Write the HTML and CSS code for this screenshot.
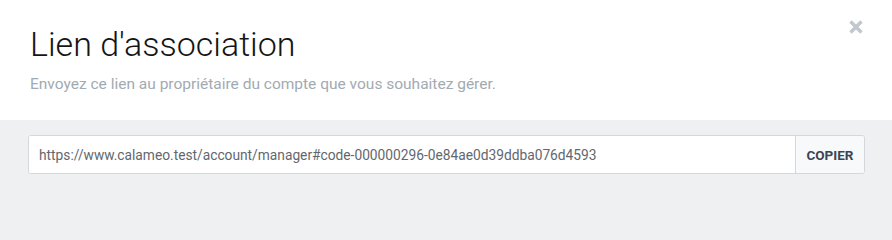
FILE: index.html
```html
<!DOCTYPE html>
<html lang="fr">
<head>
<meta charset="utf-8">
<link rel="stylesheet" href="styles.css">
</head>
<body>
<div class="modal">
  <div class="modal-header">
    <h1 class="title">Lien d'association</h1>
    <p class="subtitle">Envoyez ce lien au propriétaire du compte que vous souhaitez gérer.</p>
    <button class="close" aria-label="Fermer">
      <svg width="14" height="14" viewBox="0 0 14 14"><path d="M1.5 1.5L12.5 12.5M12.5 1.5L1.5 12.5" stroke="#c1c7cd" stroke-width="3.4" stroke-linecap="butt"/></svg>
    </button>
  </div>
  <div class="modal-body">
    <div class="input-group">
      <input class="link-input" type="text" value="https://www.calameo.test/account/manager#code-000000296-0e84ae0d39ddba076d4593" readonly>
      <button class="copy-btn">COPIER</button>
    </div>
  </div>
</div>
</body>
</html>
```
FILE: styles.css
```css
html, body {
  margin: 0;
  padding: 0;
  background: #eff0f2;
  font-family: Roboto, "Liberation Sans", sans-serif;
}
.modal {
  width: 892px;
  min-height: 202px;
  display: flex;
  flex-direction: column;
}
.modal-header {
  position: relative;
  height: 120px;
  box-sizing: border-box;
  padding: 23px 30px 0 30px;
  background: #ffffff;
}
.title {
  margin: 0;
  font-size: 34px;
  font-weight: 300;
  color: #151515;
  line-height: 42px;
}
.subtitle {
  margin: 9px 0 0 0;
  font-size: 15.5px;
  font-weight: 400;
  color: #a2aab2;
  line-height: 20px;
}
.close {
  position: absolute;
  top: 20px;
  right: 29px;
  width: 14px;
  height: 14px;
  padding: 0;
  border: 0;
  background: none;
  display: flex;
}
.modal-body {
  flex: 1;
  background: #eff0f2;
  padding: 15px 27px 28px 28px;
}
.input-group {
  display: flex;
  height: 39px;
  box-sizing: border-box;
  border: 1px solid #d4d7db;
  border-radius: 3px;
  background: #fff;
  overflow: hidden;
}
.link-input {
  flex: 1;
  border: 0;
  outline: none;
  padding: 0 10px;
  font-family: Roboto, "Liberation Sans", sans-serif;
  font-size: 13.75px;
  color: #62676e;
  background: #fff;
}
.copy-btn {
  width: 69px;
  border: 0;
  border-left: 1px solid #d4d7db;
  background: #f7f9fb;
  font-family: Roboto, "Liberation Sans", sans-serif;
  font-weight: 700;
  font-size: 13.5px;
  color: #3b4551;
  padding: 0;
}
```
